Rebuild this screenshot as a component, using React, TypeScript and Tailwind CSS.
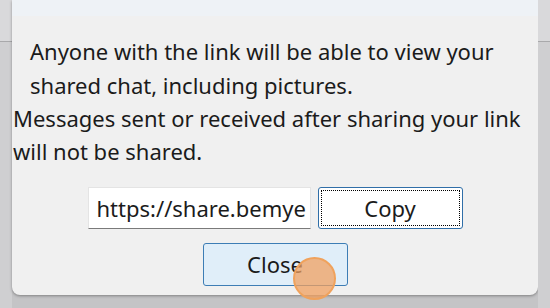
import React from "react";

const font = { fontFamily: '"Noto Sans", "Open Sans", sans-serif' };

export default function App() {
  return (
    <div
      className="relative flex h-[308px] w-[550px] overflow-hidden bg-[#c4c4c6] text-[#1b1b1b]"
      style={font}
    >
      {/* window behind, left edge */}
      <div className="flex w-[12px] flex-col bg-[#d9d9db]">
        <div className="h-[42px] border-b border-[#a9a9ab]" />
        <div className="flex-1 bg-[#cfcfd1]" />
      </div>

      {/* dialog */}
      <div className="flex h-[295px] w-[526px] flex-col rounded-b-[8px] bg-[#f0f0f0] shadow-[0_1px_3px_rgba(0,0,0,0.35)]">
        <div className="h-[16px] bg-[#eef2f6]" />
        <p className="mt-[18px] pl-[18px] text-[22px] leading-[34px]">
          Anyone with the link will be able to view your
          <br />
          shared chat, including pictures.
        </p>
        <p className="pl-[1px] text-[22px] leading-[33px]">
          Messages sent or received after sharing your link
          <br />
          will not be shared.
        </p>
        <div className="mt-[19px] flex justify-center gap-[7px]">
          <div className="flex h-[42px] w-[223px] items-center overflow-hidden whitespace-nowrap border border-b-[#7a7a7a] border-x-[#e4e4e4] border-t-[#e4e4e4] bg-white pl-[8px] text-[22px]">
            https://share.bemye
          </div>
          <button className="flex h-[42px] w-[145px] items-center justify-center rounded-[3px] border border-[#2f6ea8] bg-white p-[2px]">
            <span className="flex h-full w-full items-center justify-center border border-dotted border-black text-[22px]">
              Copy
            </span>
          </button>
        </div>
        <div className="mt-[14px] flex justify-center">
          <button className="flex h-[43px] w-[145px] items-center justify-center rounded-[3px] border border-[#3d7db5] bg-[#e0eef9] text-[22px]">
            Close
          </button>
        </div>
      </div>

      {/* window behind, right edge */}
      <div className="flex w-[12px] flex-col bg-[#d9d9db]">
        <div className="h-[42px] border-b border-[#a9a9ab]" />
        <div className="flex-1 bg-[#cfcfd1]" />
      </div>

      {/* click indicator */}
      <div className="absolute left-[293px] top-[257px] h-[43px] w-[43px] rounded-full border-2 border-[#f0a25c] bg-[#f0a060]/75" />
    </div>
  );
}
